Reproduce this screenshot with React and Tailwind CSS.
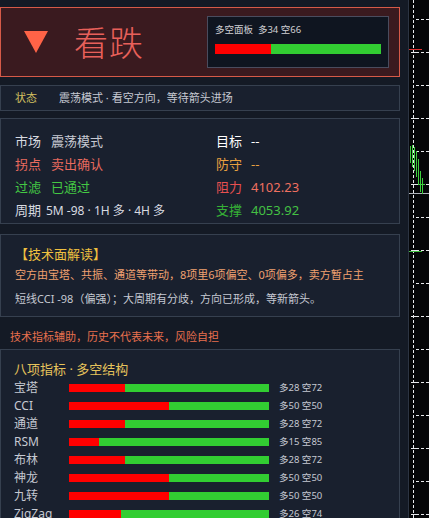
import React from "react";

const FONT = { fontFamily: '"Noto Sans", "Noto Sans CJK SC", sans-serif' };

const indicators = [
  { name: "宝塔", bull: 28 },
  { name: "CCI", bull: 50 },
  { name: "通道", bull: 28 },
  { name: "RSM", bull: 15 },
  { name: "布林", bull: 28 },
  { name: "神龙", bull: 50 },
  { name: "九转", bull: 50 },
  { name: "ZigZag", bull: 26 },
];

function Bar({ bull, className }) {
  return (
    <div className={"flex " + className}>
      <div className="h-full bg-[#ff0000]" style={{ width: `${bull}%` }} />
      <div className="h-full flex-1 bg-[#32cd32]" />
    </div>
  );
}

// slice of the price chart to the right of the panel
function ChartStrip() {
  const ticks = [19, 52, 85, 118, 151, 184, 217, 250, 283, 316, 349, 382, 415, 448, 481, 514];
  return (
    <div className="h-[518px] w-[21px] shrink-0 border-l border-[#2c3442] bg-[#050608]">
      <svg width="20" height="518" viewBox="0 0 20 518" className="block">
        <line x1="4.5" y1="0" x2="4.5" y2="518" stroke="#e8eaee" strokeWidth="1" strokeDasharray="3 2" />
        {ticks.map((y, i) => (
          <g key={y}>
            <line x1="7" y1={y + 0.5} x2="20" y2={y + 0.5} stroke="#e8eaee" strokeWidth="1" strokeDasharray="3 2" />
            {i % 2 === 1 && <line x1="2" y1={y + 0.5} x2="7" y2={y + 0.5} stroke="#e8eaee" strokeWidth="1" />}
          </g>
        ))}
        <line x1="0" y1="49.5" x2="13" y2="49.5" stroke="#e03030" strokeWidth="1" />
        <line x1="0" y1="193.5" x2="20" y2="193.5" stroke="#b0b4bc" strokeWidth="1" />
        <line x1="0" y1="251.5" x2="13" y2="251.5" stroke="#40c040" strokeWidth="1" />
        <g stroke="#3ed03e" strokeWidth="1" fill="none">
          <line x1="1.5" y1="146" x2="1.5" y2="163" />
          <line x1="3.5" y1="145" x2="3.5" y2="167" />
          <line x1="5.5" y1="147" x2="5.5" y2="171" />
          <line x1="7.5" y1="151" x2="7.5" y2="177" />
          <line x1="9.5" y1="159" x2="9.5" y2="185" />
          <line x1="11.5" y1="171" x2="11.5" y2="192" />
          <line x1="13.5" y1="178" x2="13.5" y2="194" />
          <line x1="10" y1="184.5" x2="16" y2="184.5" />
        </g>
      </svg>
    </div>
  );
}

export default function App() {
  return (
    <div className="flex h-[518px] w-[429px] overflow-hidden bg-[#141a25]" style={FONT}>
      <div className="flex w-[408px] shrink-0 flex-col pt-[7px]">
        <div className="w-[400px]">
          {/* verdict header */}
          <div className="flex h-[70px] items-center border border-[#d65a48] bg-[#3a1a1f]">
            <svg className="ml-[22px]" width="26" height="24" viewBox="0 0 26 24">
              <polygon points="1,1 25,1 13,23" fill="#ff6347" />
            </svg>
            <div
              className="ml-[25px] text-[34px] leading-none tracking-[1px] text-[#e8605a]"
              style={{ fontFamily: '"Noto Sans CJK SC", sans-serif', fontWeight: 300 }}
            >
              看跌
            </div>
            <div className="ml-auto mr-[10px] flex h-[52px] w-[182px] flex-col border border-[#4a4c5e] bg-[#0f1520] px-[7px] pt-[5px]">
              <div className="text-[9.5px] leading-[15px] text-[#d0d0d4]">多空面板&nbsp;&nbsp;多34 空66</div>
              <Bar bull={34} className="mt-[7px] h-[10px] w-[166px]" />
            </div>
          </div>

          {/* status line */}
          <div className="mt-[8px] flex h-[26px] items-center border border-[#36404f] bg-[#19202e] text-[11px]">
            <span className="ml-[14px] text-[#d4c060]">状态</span>
            <span className="ml-[22px] text-[#c6c9d2]">震荡模式 · 看空方向，等待箭头进场</span>
          </div>

          {/* market info */}
          <div className="mt-[7px] grid grid-cols-[215px_1fr] border border-[#36404f] bg-[#19202e] pb-[1px] pt-[11px] text-[13px] leading-[23px]">
            <div className="pl-[14px]">
              <div className="flex">
                <span className="w-[36px] text-[#d8dae0]">市场</span>
                <span className="text-[#c6c9d2]">震荡模式</span>
              </div>
              <div className="flex">
                <span className="w-[36px] text-[#e86a5e]">拐点</span>
                <span className="text-[#e86a5e]">卖出确认</span>
              </div>
              <div className="flex">
                <span className="w-[36px] text-[#44c844]">过滤</span>
                <span className="text-[#44c844]">已通过</span>
              </div>
              <div className="flex items-baseline">
                <span className="w-[31px] text-[#d8dae0]">周期</span>
                <span className="text-[12px] text-[#d8dae0]">5M -98 · 1H 多 · 4H 多</span>
              </div>
            </div>
            <div>
              <div className="flex">
                <span className="w-[35px] text-[#ffffff]">目标</span>
                <span className="text-[#ffffff]">--</span>
              </div>
              <div className="flex">
                <span className="w-[35px] text-[#e8a040]">防守</span>
                <span className="text-[#e8a040]">--</span>
              </div>
              <div className="flex">
                <span className="w-[35px] text-[#e85050]">阻力</span>
                <span className="text-[#f07060]">4102.23</span>
              </div>
              <div className="flex">
                <span className="w-[35px] text-[#36b036]">支撑</span>
                <span className="text-[#44c044]">4053.92</span>
              </div>
            </div>
          </div>

          {/* technical reading */}
          <div className="mt-[10px] h-[83px] border border-[#36404f] bg-[#19202e] pl-[14px] pt-[9px]">
            <div className="text-[13px] leading-[20px] text-[#f0c040]">【技术面解读】</div>
            <div className="mt-[1px] whitespace-nowrap text-[11px] leading-[20px] text-[#f0a070]">
              空方由宝塔、共振、通道等带动，8项里6项偏空、0项偏多，卖方暂占主
            </div>
            <div className="mt-[4px] whitespace-nowrap text-[11px] leading-[20px] text-[#c6c9d2]">
              短线CCI -98（偏强）；大周期有分歧，方向已形成，等新箭头。
            </div>
          </div>

          <div className="ml-[10px] mt-[11px] text-[11px] leading-[18px] text-[#e8704e]">
            技术指标辅助，历史不代表未来，风险自担
          </div>

          {/* indicator breakdown */}
          <div className="mt-[3px] border border-[#36404f] bg-[#19202e] pl-[13px] pt-[9px]">
            <div className="text-[13px] leading-[20px] text-[#e6c45c]">八项指标 · 多空结构</div>
            {indicators.map((it) => (
              <div key={it.name} className="flex h-[18px] items-center">
                <span className="w-[55px] text-[12px] text-[#c6c9d2]">{it.name}</span>
                <Bar bull={it.bull} className="h-[8px] w-[200px]" />
                <span className="ml-[10px] text-[9.5px] text-[#c6c9d2]">
                  多{it.bull} 空{100 - it.bull}
                </span>
              </div>
            ))}
          </div>
        </div>
      </div>
      <ChartStrip />
    </div>
  );
}
